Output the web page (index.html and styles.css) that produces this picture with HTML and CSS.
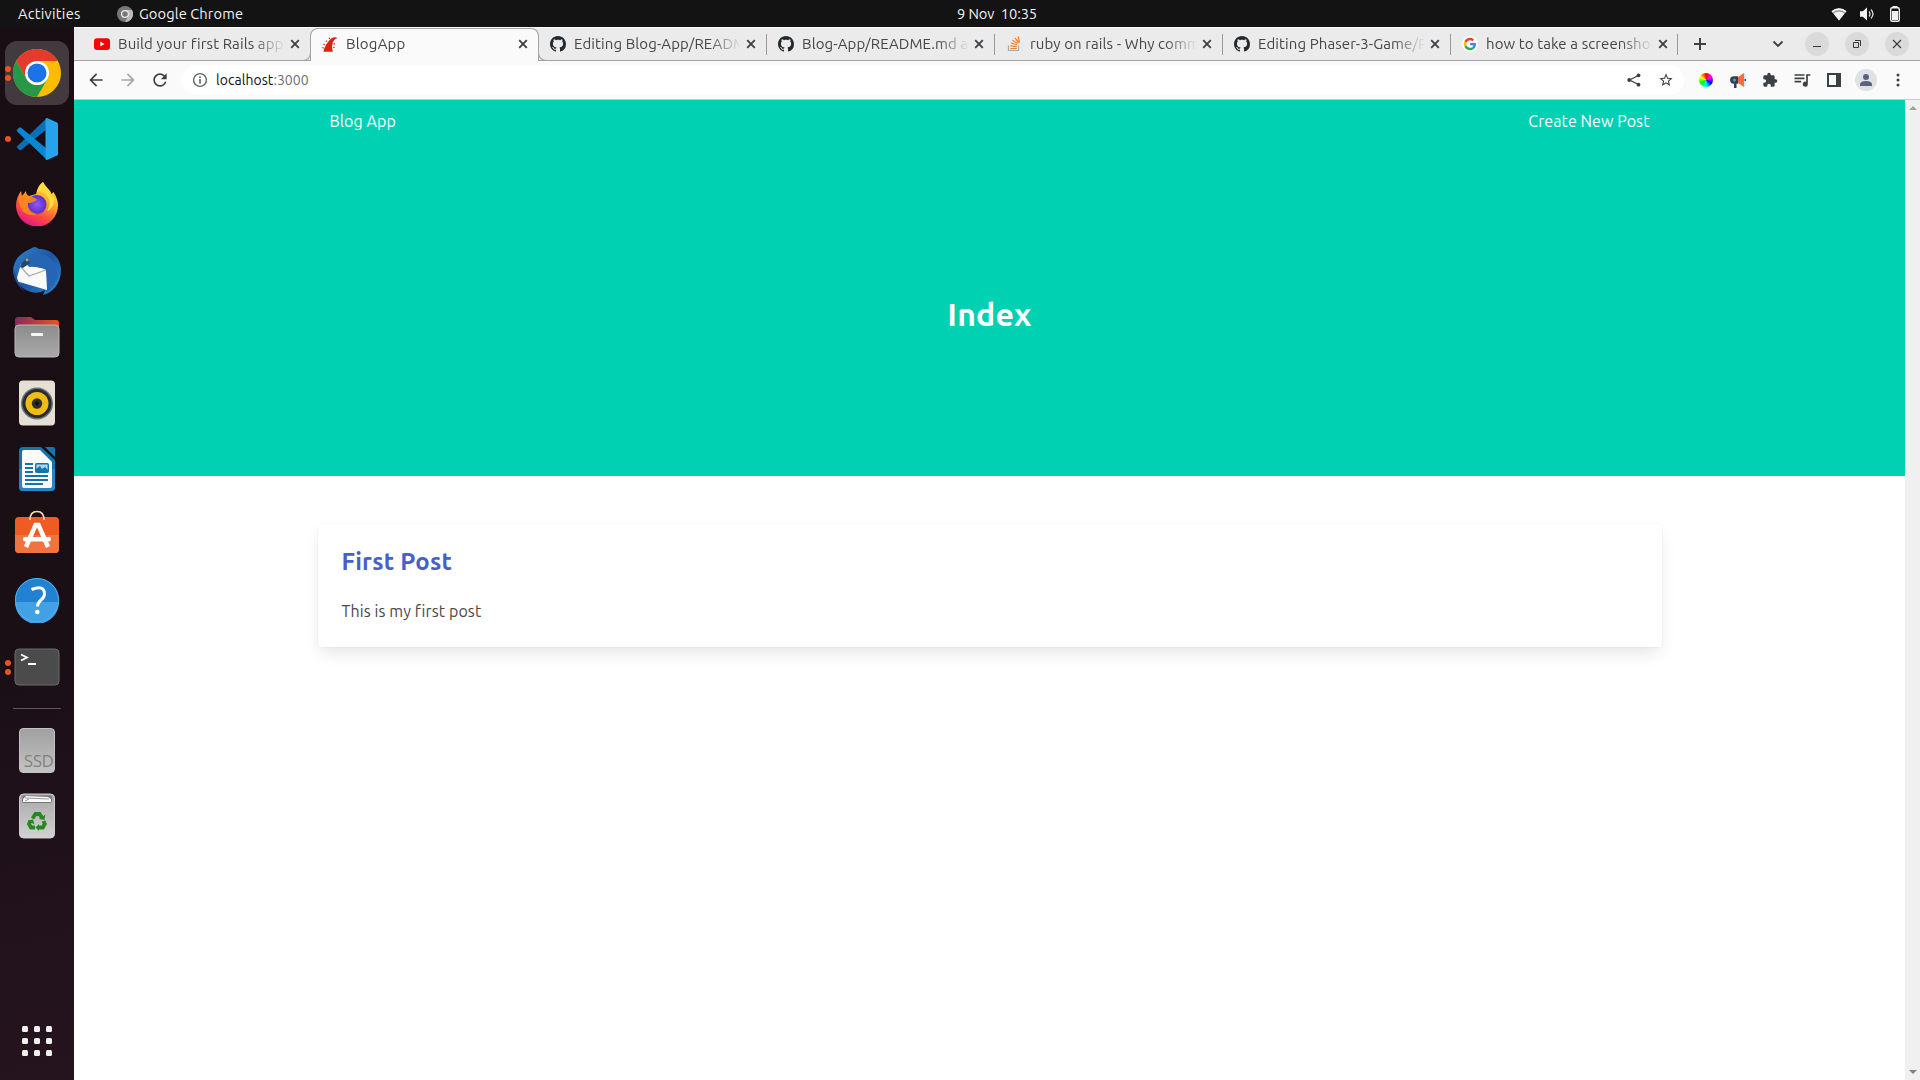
FILE: index.html
```html
<!DOCTYPE html>
<html lang="en">
<head>
<meta charset="utf-8">
<title>BlogApp</title>
<link rel="stylesheet" href="styles.css">
</head>
<body>
<svg width="0" height="0" class="defs">
  <defs>
    <symbol id="github" viewBox="0 0 16 16"><path fill="#24292f" d="M8 0C3.58 0 0 3.58 0 8c0 3.54 2.29 6.53 5.47 7.59.4.07.55-.17.55-.38 0-.19-.01-.82-.01-1.49-2.01.37-2.53-.49-2.69-.94-.09-.23-.48-.94-.82-1.13-.28-.15-.68-.52-.01-.53.63-.01 1.08.58 1.23.82.72 1.21 1.87.87 2.33.66.07-.52.28-.87.51-1.07-1.78-.2-3.64-.89-3.64-3.95 0-.87.31-1.59.82-2.15-.08-.2-.36-1.02.08-2.12 0 0 .67-.21 2.2.82.64-.18 1.32-.27 2-.27s1.36.09 2 .27c1.53-1.04 2.2-.82 2.2-.82.44 1.1.16 1.92.08 2.12.51.56.82 1.27.82 2.15 0 3.07-1.87 3.75-3.65 3.95.29.25.54.73.54 1.48 0 1.07-.01 1.93-.01 2.2 0 .21.15.46.55.38A8.01 8.01 0 0 0 16 8c0-4.42-3.58-8-8-8z"/></symbol>
    <symbol id="close" viewBox="0 0 16 16"><path d="M4.2 4.200l7.600 7.600M11.800 4.200l-7.600 7.600" stroke="#3c4043" stroke-width="1.800"/></symbol>
  </defs>
</svg>
<header class="topbar">
  <span class="activities">Activities</span>
  <span class="app">
    <svg width="16" height="16" viewBox="0 0 16 16"><circle cx="8" cy="8" r="8" fill="#777"/><path d="M8 4h7a8 8 0 0 1-7 12l3.500-6z" fill="#bbb"/><circle cx="8" cy="8" r="3.400" fill="#777" stroke="#eee" stroke-width="1.300"/></svg>
    <span class="appname">Google Chrome</span>
  </span>
  <span class="clock">9 Nov&nbsp; 10:35</span>
  <span class="tray">
    <svg width="16" height="16" viewBox="0 0 16 16"><path d="M.5 5.200a10.800 10.800 0 0 1 15 0L8 14.500z" fill="#888"/><path d="M.5 5.200a10.800 10.800 0 0 1 15 0l-1.300 1.500a9 9 0 0 0-12.400 0z" fill="#f2f2f2"/><path d="M2.400 7.600a8.200 8.200 0 0 1 11.200 0L8 14.500z" fill="#f2f2f2"/></svg>
    <svg width="16" height="16" viewBox="0 0 16 16"><path d="M1 5.200h2.800L8 1.500v13L3.800 10.800H1z" fill="#f2f2f2"/><path d="M10 5.500q2 2.500 0 5M12 3.500q4 4.500 0 9" fill="none" stroke="#d8d8d8" stroke-width="1.300"/></svg>
    <svg width="16" height="16" viewBox="0 0 16 16"><path d="M5.500 0h5v1.500h-5z" fill="#f2f2f2"/><rect x="3.700" y="1.700" width="8.600" height="13.600" rx="1.600" fill="none" stroke="#f2f2f2" stroke-width="1.400"/><path d="M5 5h6v9H5z" fill="#f2f2f2"/></svg>
  </span>
</header>
<div class="desktop">
  <nav class="dock">
    <div class="slot focused two">
      <svg width="48" height="48" viewBox="0 0 48 48"><circle cx="24" cy="24" r="24" fill="#fbbc04"/><path d="M24 12H44.800A24 24 0 0 0 3.200 12L13.600 30z" fill="#e33b2e"/><path d="M3.200 12A24 24 0 0 0 24 48L34.400 30A12 12 0 0 1 13.600 30z" fill="#279847"/><circle cx="24" cy="24" r="12" fill="#fff"/><circle cx="24" cy="24" r="9.500" fill="#1a73e8"/></svg>
    </div>
    <div class="slot one">
      <svg width="42" height="42" viewBox="0 0 42 42"><path d="M1 28.500L31 0v11L5 32q-1 .5-2-.5l-2-2q-.7-.5 0-1z" fill="#0a6fb5"/><path d="M1.200 13.500q-1-1 0-2l2-1.800q1-.7 2 0L31 31v11z" fill="#0a87d2"/><path d="M31 0l10 4.500q1 .5 1 1.500v30q0 1-1 1.500L31 42q-1.500.2-1.500-1.500V1.500Q29.500 0 31 0z" fill="#27a3ee"/></svg>
    </div>
    <div class="slot raised">
      <svg width="44" height="44" viewBox="0 0 44 44">
        <defs><linearGradient id="ff" x1=".8" y1="0" x2=".3" y2="1"><stop offset="0" stop-color="#fff14a"/><stop offset=".35" stop-color="#ffb02a"/><stop offset=".7" stop-color="#ff4c3f"/><stop offset="1" stop-color="#e3128a"/></linearGradient><radialGradient id="fp"><stop offset="0" stop-color="#9059ff"/><stop offset="1" stop-color="#5b2fc0"/></radialGradient></defs>
        <path d="M28 0c1 3 5 6 7 9 1 1 1 2 1.500 3l2-2c3 5 4.500 9 4.500 13A21 21 0 0 1 1 24c0-6 2-11 5-15l1 5 4-5c0 3 1 4 3 5l7-2c1-5 3-9 7-12z" fill="url(#ff)"/>
        <circle cx="22" cy="22.500" r="9.500" fill="url(#fp)"/>
        <path d="M4 16c2-3 6-4 10-2 3 1 6 1 8 4-3 1-4 3-9 3-1 5 3 10 9 11-8 3-15-1-17-8-1-3-2-5-1-8z" fill="#ff8a20" opacity=".85"/>
        <path d="M22 10c4-2 8 0 11 5s1 11-1 14c4-1 8-7 7-14-2 1-4-2-5-5L28 0c-4 3-5 6-6 10z" fill="#ffdb3d"/>
      </svg>
    </div>
    <div class="slot">
      <svg width="48" height="48" viewBox="0 0 48 48">
        <defs><linearGradient id="tb" x1="0" y1="0" x2="1" y2="1"><stop offset="0" stop-color="#2f83cf"/><stop offset=".5" stop-color="#1f56a5"/><stop offset="1" stop-color="#2b8bd2"/></linearGradient></defs>
        <path d="M17 2l4-2q3 0 5 2c12 0 22 9 22 21 0 14-9 23-18 25l2-5q-6 4-14 2-14-4-18-20Q0 9 17 2z" fill="url(#tb)"/>
        <path d="M8 17L33 22 34 43 3 34z" fill="#fafafa"/><path d="M7 19l9 10 17-6" fill="none" stroke="#aaa" stroke-width="1.300"/>
        <path d="M20 7q16-1 21 9l4 12q-2 10-12 18l1-3q1-10-1-20-6-4-17-3L12 14z" fill="#2565b4"/><path d="M7 20q1-4 7-9l3 5-7 5z" fill="#24466f"/><circle cx="14" cy="13" r="1.400" fill="#c99f62"/>
        <path d="M0 20q-1 15 13 26Q6 39 4 31z" fill="#1c4e98"/>
      </svg>
    </div>
    <div class="slot">
      <svg width="46" height="42" viewBox="0 0 46 42">
        <defs><linearGradient id="fo"><stop stop-color="#872a5d"/><stop offset="1" stop-color="#e9541f"/></linearGradient><linearGradient id="gr" x1="0" y1="0" x2="0" y2="1"><stop stop-color="#8c8c8c"/><stop offset="1" stop-color="#a9a9a9"/></linearGradient></defs>
        <path d="M1 20V4q0-3 3-3h13l4 3h21q3 0 3 3v13z" fill="url(#fo)"/><rect x="1" y="9" width="44" height="32" rx="4" fill="url(#gr)" stroke="#b9b9b9"/><rect x="17" y="17" width="12" height="3" rx="1" fill="#f6f6f6"/>
      </svg>
    </div>
    <div class="slot">
      <svg width="36" height="46" viewBox="0 0 36 46"><rect y=".5" width="36" height="45" rx="4" fill="#e4e0d4"/><circle cx="18" cy="23.500" r="16" fill="#6f7077"/><circle cx="18" cy="23.500" r="14.500" fill="#292b33"/><circle cx="18" cy="23.500" r="11.500" fill="#f0bc12"/><circle cx="18" cy="23.500" r="5.200" fill="#2e2e2e"/><circle cx="18" cy="23.500" r="2" fill="#111"/></svg>
    </div>
    <div class="slot">
      <svg width="36" height="44" viewBox="0 0 36 44"><path d="M4 0h18l14 13v27q0 4-4 4H4q-4 0-4-4V4q0-4 4-4z" fill="#1273ae"/><path d="M0 22h36v18q0 4-4 4H4q-4 0-4-4z" fill="#2587c0"/><path d="M5 3h16l12 12v24q0 2-2 2H5q-2 0-2-2V5q0-2 2-2z" fill="#fafafa"/><path d="M26 0h8q2 0 2 2v8z" fill="#1575ae"/><path d="M6 17h8M6 21h8M6 25h8M6 29h23M6 33h23M6 37h18" stroke="#1273ae" stroke-width="2"/><rect x="16.700" y="16.700" width="12.600" height="8.600" rx="1" fill="#a9d6ef" stroke="#1273ae" stroke-width="1.400"/><path d="M17 25v-3l4-3 2 3 3-2 3 3v2z" fill="#1273ae"/></svg>
    </div>
    <div class="slot raised2">
      <svg width="46" height="44" viewBox="0 0 46 44"><rect x="1" y="7" width="44" height="36" rx="4" fill="#ee5c24"/><path d="M1 25h44v14q0 4-4 4H5q-4 0-4-4z" fill="#f0743f"/><path d="M16 10q0-8.500 7-8.500t7 8.500" fill="none" stroke="#f6d9ae" stroke-width="1.700"/><path d="M12 37l9.500-22h3L34 37" fill="none" stroke="#fff" stroke-width="4.500"/><rect x="9" y="27" width="28" height="4.500" rx="2" fill="#fff"/></svg>
    </div>
    <div class="slot raised">
      <svg width="46" height="46" viewBox="0 0 46 46"><circle cx="23" cy="23" r="22" fill="#2181d3"/><path d="M1 25h44a22 22 0 0 1-44 0z" fill="#42a0e4"/><circle cx="23" cy="23" r="21.500" fill="none" stroke="#5aaee8"/><path d="M17.500 12.500q13-5 13 4.500 0 3-3.500 6t-3.500 6.500" fill="none" stroke="#fff" stroke-width="3"/><circle cx="23.300" cy="35" r="2.300" fill="#fff"/></svg>
    </div>
    <div class="slot two">
      <svg width="46" height="38" viewBox="0 0 46 38"><rect x="1" y="1" width="44" height="36" rx="4" fill="#4b4b4b" stroke="#6c6c6c"/><path d="M7 6.500l6 3-6 3M14 16h8" fill="none" stroke="#fff" stroke-width="1.800"/></svg>
    </div>
    <hr class="rule">
    <div class="slot">
      <div class="ssd">SSD</div>
    </div>
    <div class="slot">
      <svg width="36" height="46" viewBox="0 0 36 46"><defs><linearGradient id="tr" x1="0" y1="0" x2="0" y2="1"><stop stop-color="#a9a9a9"/><stop offset="1" stop-color="#d2d2d2"/></linearGradient></defs><rect x=".5" y="1" width="35" height="44" rx="4" fill="url(#tr)" stroke="#ccc"/><rect x="3" y="2.500" width="30" height="7.500" rx="2" fill="#777"/><path d="M4 9V6l3-3 22 1 3 2v3z" fill="#fafafa"/><path d="M6 5l24 1M6 8l4-2" stroke="#999" fill="none"/>
      <g fill="none" stroke="#28871f" stroke-width="3.800"><path d="M13.500 25.500l3-4.500h4l2.500 4"/><path d="M24.500 28l1.300 3-2 3.500H19"/><path d="M16 34.500h-4L10 31l1.500-3"/></g><g fill="#28871f"><path d="M20 26l5.500 1 .8-5.500z"/><path d="M20 31v7l-3.500-3.500z"/><path d="M8.500 27.500l5.500-1 1.500 5z"/></g></svg>
    </div>
    <div class="grid"><i></i><i></i><i></i><i></i><i></i><i></i><i></i><i></i><i></i></div>
  </nav>
  <section class="browser">
    <div class="tabs">
      <div class="tab before">
        <svg width="16" height="16" viewBox="0 0 16 16"><rect y="2.300" width="16" height="11.600" rx="3" fill="#f00"/><path d="M6.300 5.600v5l4.200-2.500z" fill="#fff"/></svg>
        <span class="title">Build your first Rails app w</span><svg width="16" height="16"><use href="#close"/></svg>
      </div>
      <div class="tab active">
        <svg width="16" height="16" viewBox="0 0 16 16"><path d="M1.500 15.700C2 12 4 8.500 6 6 8 3 10.500 1.200 13 1.200q1.500 0 2.500 1-2 0-3.500 2C10 7 9.500 12 11 15.700z" fill="#d9230f"/><path d="M.3 11.500l1.400.6M1.500 8l1.300.8M4 4.700l1 .9M7 1.800l.7 1.100M11.600 7.600l1.300.5M11.300 11.300l1.400.2" stroke="#d9230f" stroke-width="1.200"/></svg>
        <span class="title">BlogApp</span><svg width="16" height="16"><use href="#close"/></svg>
      </div>
      <div class="tab after">
        <svg width="16" height="16"><use href="#github"/></svg>
        <span class="title">Editing Blog-App/README</span><svg width="16" height="16"><use href="#close"/></svg>
      </div>
      <div class="tab line">
        <svg width="16" height="16"><use href="#github"/></svg>
        <span class="title">Blog-App/README.md at</span><svg width="16" height="16"><use href="#close"/></svg>
      </div>
      <div class="tab line">
        <svg width="16" height="16" viewBox="0 0 16 16"><path d="M2.500 9.500v5h10v-5" fill="none" stroke="#a7a9ac" stroke-width="1.200"/><path d="M4.300 12.500h6.400M4.400 9.900l6.300.7M5 7l6 1.800M6.500 4.200l5.300 3.300M9 1.800l3.800 5M12.200.5l1.300 6" stroke="#f48024" stroke-width="1.200"/></svg>
        <span class="title">ruby on rails - Why commit</span><svg width="16" height="16"><use href="#close"/></svg>
      </div>
      <div class="tab line">
        <svg width="16" height="16"><use href="#github"/></svg>
        <span class="title">Editing Phaser-3-Game/RE</span><svg width="16" height="16"><use href="#close"/></svg>
      </div>
      <div class="tab line">
        <svg width="16" height="16" viewBox="-7 -7 62 62"><circle cx="24" cy="24" r="31" fill="#fff"/><path fill="#EA4335" d="M24 9.500c3.540 0 6.710 1.220 9.210 3.600l6.850-6.850C35.900 2.380 30.470 0 24 0 14.620 0 6.510 5.380 2.560 13.220l7.980 6.190C12.430 13.720 17.740 9.500 24 9.500z"/><path fill="#4285F4" d="M46.980 24.550c0-1.570-.15-3.090-.38-4.550H24v9.020h12.940c-.58 2.960-2.260 5.480-4.780 7.180l7.730 6c4.510-4.180 7.090-10.360 7.090-17.650z"/><path fill="#FBBC05" d="M10.530 28.590A14.500 14.500 0 0 1 9.770 24c0-1.600.27-3.140.76-4.590l-7.980-6.190A23.900 23.900 0 0 0 0 24c0 3.880.92 7.540 2.560 10.780z"/><path fill="#34A853" d="M24 48c6.480 0 11.930-2.130 15.890-5.810l-7.730-6c-2.150 1.450-4.920 2.300-8.160 2.300-6.260 0-11.570-4.220-13.470-9.910l-7.980 6.190C6.510 42.620 14.620 48 24 48z"/></svg>
        <span class="title">how to take a screenshot</span><svg width="16" height="16"><use href="#close"/></svg>
      </div>
      <div class="newtab"><svg width="12" height="12" viewBox="0 0 12 12"><path d="M6 0v12M0 6h12" stroke="#3c4043" stroke-width="2"/></svg></div>
      <div class="controls">
        <svg width="12" height="8" viewBox="0 0 12 8"><path d="M1.500 1.500L6 6l4.500-4.500" fill="none" stroke="#3c4043" stroke-width="1.900"/></svg>
        <span class="winbtn"><svg width="12" height="12" viewBox="0 0 12 12"><path d="M2 8.500h8" stroke="#3a3a3a"/></svg></span>
        <span class="winbtn"><svg width="12" height="12" viewBox="0 0 12 12"><path d="M2.500 4.500h5v5h-5zM4 2.500h5.500V8" fill="none" stroke="#3a3a3a"/></svg></span>
        <span class="winbtn"><svg width="12" height="12" viewBox="0 0 12 12"><path d="M2 2l8 8M10 2l-8 8" stroke="#3a3a3a" stroke-width="1.100"/></svg></span>
      </div>
    </div>
    <div class="toolbar">
      <span class="tool"><svg width="20" height="20" viewBox="0 0 24 24"><path d="M20 11H7.830l5.590-5.590L12 4l-8 8 8 8 1.410-1.410L7.830 13H20z"/></svg></span>
      <span class="tool faded"><svg width="20" height="20" viewBox="0 0 24 24"><path d="M12 4l-1.410 1.410L16.170 11H4v2h12.170l-5.580 5.590L12 20l8-8z"/></svg></span>
      <span class="tool"><svg width="20" height="20" viewBox="0 0 24 24"><path d="M17.650 6.350A7.960 7.960 0 0 0 12 4c-4.420 0-7.990 3.580-7.990 8s3.570 8 7.990 8c3.730 0 6.840-2.550 7.730-6h-2.080A5.990 5.990 0 0 1 12 18c-3.310 0-6-2.690-6-6s2.690-6 6-6c1.660 0 3.140.69 4.220 1.780L13 11h7V4z"/></svg></span>
      <div class="omnibox">
        <svg width="16" height="16" viewBox="0 0 16 16"><circle cx="8" cy="8" r="6.400" fill="none" stroke="#5f6368" stroke-width="1.400"/><path d="M7.200 4.300h1.600v1.600H7.200zM7.200 7.100h1.600v4.600H7.200z" fill="#5f6368"/></svg>
        <span class="url">localhost<span>:3000</span></span>
        <span class="tool"><svg width="14" height="14" viewBox="0 0 14 14"><path d="M11.500 2.500L2.500 7l9 4.500" fill="none" stroke="#3c4043" stroke-width="1.300"/><circle cx="11.500" cy="2.300" r="1.900"/><circle cx="2.200" cy="7" r="1.900"/><circle cx="11.500" cy="11.700" r="1.900"/></svg></span>
        <span class="tool"><svg width="16" height="16" viewBox="0 0 24 24"><path d="M22 9.240l-7.190-.62L12 2 9.190 8.630 2 9.240l5.460 4.730L5.820 21 12 17.270 18.180 21l-1.630-7.030zM12 15.400l-3.760 2.270 1-4.280-3.320-2.880 4.380-.38L12 6.100l1.710 4.040 4.380.38-3.320 2.880 1 4.280z"/></svg></span>
      </div>
      <span class="tool"><i class="wheel"></i></span>
      <span class="tool"><svg width="16" height="16" viewBox="0 0 16 16"><path d="M14.500 1v14" stroke="#cfe6f7" stroke-width="2"/><path d="M8 5l6-4v14l-6-4z" fill="#ff6c37"/><path d="M3.800 4.300H8v7.400H6.500V16H4v-4.300h-.2a3.700 3.700 0 0 1 0-7.400z" fill="#2b4257"/><circle cx="4.400" cy="8" r="1.500" fill="#6f96b8"/><path d="M14.500 7h1.500v2h-1.500z" fill="#2b4257"/></svg></span>
      <span class="tool"><svg width="16" height="16" viewBox="0 0 24 24"><path d="M20.500 11H19V7c0-1.100-.9-2-2-2h-4V3.500a2.500 2.500 0 0 0-5 0V5H4c-1.100 0-1.990.9-1.990 2v3.800H3.500a2.700 2.700 0 0 1 0 5.400H2V20c0 1.100.9 2 2 2h3.800v-1.500a2.700 2.700 0 0 1 5.400 0V22H17c1.100 0 2-.9 2-2v-4h1.500a2.500 2.500 0 0 0 0-5z"/></svg></span>
      <span class="tool"><svg width="20" height="20" viewBox="0 0 24 24"><path d="M15 5H3v2h12V5zm0 4H3v2h12V9zM3 15h8v-2H3v2zM17 5v9.180A3 3 0 1 0 19 17V7h3V5z"/></svg></span>
      <span class="tool"><svg width="14" height="14" viewBox="0 0 14 14"><path d="M0 0h14v14H0zM2 2v10h7V2z" fill-rule="evenodd"/></svg></span>
      <span class="tool"><svg width="22" height="22" viewBox="0 0 22 22"><circle cx="11" cy="11" r="11" fill="#dee1e6"/><circle cx="11" cy="8" r="3" fill="#5a6478"/><path d="M5 17v-1.500q0-3.500 6-3.500t6 3.500V17z" fill="#5a6478"/></svg></span>
      <span class="tool"><svg width="4" height="14" viewBox="0 0 4 14"><circle cx="2" cy="2" r="1.500"/><circle cx="2" cy="7" r="1.500"/><circle cx="2" cy="12" r="1.500"/></svg></span>
    </div>
    <div class="viewport">
      <main class="page">
        <section class="hero">
          <nav class="navbar"><a>Blog App</a><a>Create New Post</a></nav>
          <div class="herobody"><h1>Index</h1></div>
        </section>
        <section class="posts">
          <article class="box"><h2>First Post</h2><p>This is my first post</p></article>
        </section>
      </main>
      <div class="scrollbar"><i class="up"></i><i class="down"></i></div>
    </div>
  </section>
</div>
</body>
</html>
```
FILE: styles.css
```css
* { box-sizing: border-box; }
body { margin: 0; width: 1920px; height: 1080px; overflow: hidden; display: flex; flex-direction: column; font-family: Ubuntu, "Noto Sans", sans-serif; background: #fff; }
svg { display: block; flex: none; }
.defs { display: none; }
.topbar { height: 27px; flex: none; background: #131313; color: #f2f2f2; display: grid; grid-template-columns: 117px 840px 1fr auto; align-items: center; font-size: 14.67px; white-space: nowrap; }
.activities { padding-left: 18px; letter-spacing: 0.25px; }
.app { display: flex; gap: 6px; align-items: center; }
.appname { letter-spacing: 0.1px; }
.clock { letter-spacing: -0.1px; }
.tray { display: flex; gap: 12px; padding-right: 17px; }
.desktop { flex: 1; display: flex; min-height: 0; }
.dock { width: 74px; flex: none; padding: 14px 5px 0; background: linear-gradient(165deg, #190e14 0%, #1b0f16 60%, #25141e 100%); display: flex; flex-direction: column; gap: 2px; }
.slot { height: 64px; flex: none; display: flex; align-items: center; justify-content: center; border-radius: 12px; position: relative; }
.focused { background: #433a40; }
.raised { padding-bottom: 2px; }
.raised2 { padding-bottom: 6px; }
.one::before, .two::before { content: ""; position: absolute; left: 0; top: 29px; width: 6px; height: 6px; border-radius: 50%; background: #e95420; }
.two::before { top: 25px; box-shadow: 0 9px #e95420; }
.rule { width: 48px; height: 1px; border: 0; margin: 7px auto; background: #5d555a; flex: none; }
.ssd { width: 36px; height: 45px; border-radius: 4px; border: 1px solid #c2c2c2; background: linear-gradient(#a0a0a0, #c3c3c3); color: #808080; font-size: 17px; line-height: 18px; padding: 23px 0 0 4px; }
.grid { margin: auto auto 24px; display: grid; grid-template-columns: repeat(3, 6px); gap: 6px; }
.grid i { width: 6px; height: 6px; border-radius: 1.5px; background: #f0f0ee; }
.browser { flex: 1; min-width: 0; display: flex; flex-direction: column; }
.tabs { height: 34px; flex: none; background: #ebebeb; border-bottom: 1px solid #a2a2a2; border-top: 1px solid #f7f7f7; padding-left: 8px; display: flex; }
.tab { width: 228px; height: 33px; flex: none; display: flex; align-items: center; padding: 0 7px 1px 12px; position: relative; }
.tab .title { width: 167px; margin: 0 2px 0 8px; overflow: hidden; white-space: nowrap; font-size: 15px; letter-spacing: 0.1px; line-height: 20px; color: #454545; mask-image: linear-gradient(90deg, #000 135px, transparent 167px); }
.active { width: 229px; margin-right: -1px; z-index: 1; background: #fafafa; border: 1px solid #a2a2a2; border-bottom: 0; border-radius: 8px 8px 0 0; padding: 0 7px 2px 11px; }
.active .title { letter-spacing: 0.2px; }
.before::after, .after::before { content: ""; position: absolute; bottom: 0; width: 8px; height: 8px; border-bottom: 1px solid #a2a2a2; }
.before::after { right: -1px; border-right: 1px solid #a2a2a2; border-bottom-right-radius: 8px; }
.after::before { left: 0; border-left: 1px solid #a2a2a2; border-bottom-left-radius: 8px; z-index: 2; }
.line::before { content: ""; position: absolute; left: 0; top: 6px; width: 1px; height: 21px; background: #999; }
.newtab { width: 44px; display: flex; align-items: center; justify-content: center; position: relative; padding-bottom: 1px; }
.newtab::before { content: ""; position: absolute; left: -1px; top: 6px; width: 1px; height: 21px; background: #999; }
.controls { margin-left: auto; padding: 0 11px 1px 0; display: flex; align-items: center; gap: 16px; }
.controls > svg { margin-right: 5px; }
.winbtn { width: 24px; height: 24px; border-radius: 50%; background: #dadada; display: flex; align-items: center; justify-content: center; }
.toolbar { height: 39px; flex: none; background: #fafafa; border-bottom: 1px solid #c9c9c9; padding: 0 6px; display: flex; align-items: center; }
.tool { width: 32px; height: 32px; flex: none; display: flex; align-items: center; justify-content: center; fill: #3c4043; }
.faded { opacity: .45; }
.omnibox { flex: 1; height: 30px; margin: 0 6px 0 5px; border-radius: 15px; background: #fff; display: flex; align-items: center; padding: 0 2px 0 11px; }
.url { margin: 0 auto 0 8px; font-size: 14px; letter-spacing: 0.05px; color: #111; }
.url span { color: #6b6f73; }
.wheel { width: 14px; height: 14px; border-radius: 50%; background: conic-gradient(#f00, #f0f 17%, #00f 33%, #0ff 50%, #0f0 67%, #ff0 83%, #f00); }
.viewport { flex: 1; display: flex; min-height: 0; }
.page { flex: 1; }
.hero { height: 376px; background: #00d1b2; color: #fff; display: flex; flex-direction: column; }
.navbar { width: 1344px; height: 40px; flex: none; margin: 0 auto; padding: 1px 12px 0; display: flex; justify-content: space-between; align-items: center; font-size: 16px; letter-spacing: 0.08px; }
.herobody { flex: 1; display: flex; justify-content: center; align-items: center; }
h1 { margin: 12px 0 0; font-size: 32px; line-height: 36px; letter-spacing: 0.2px; }
.posts { padding: 48px 0; width: 1344px; margin: 0 auto; }
.box { height: 123px; padding: 24px; border-radius: 4px; box-shadow: 0 8px 16px -2px rgba(10, 10, 10, .1), 0 0 0 1px rgba(10, 10, 10, .02); color: #4a4a4a; }
h2 { margin: 0; font-size: 24px; line-height: 27px; letter-spacing: 0.22px; color: #485fc7; }
.box p { margin: 24px 0 0; font-size: 16px; line-height: 24px; letter-spacing: 0.1px; }
.scrollbar { width: 15px; background: #f0f0f0; display: flex; flex-direction: column; justify-content: space-between; align-items: center; padding: 6px 0; }
.scrollbar i { border: 4px solid transparent; }
.scrollbar .up { border-top: 0; border-bottom-color: #a0a0a0; }
.scrollbar .down { border-bottom: 0; border-top-color: #808080; }
```
